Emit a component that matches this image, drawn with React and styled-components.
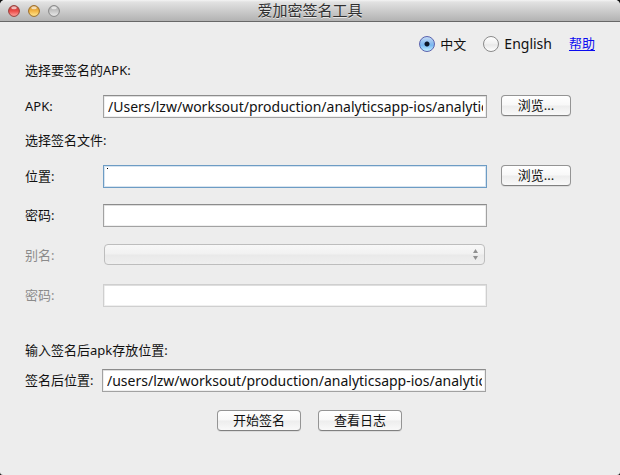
import React, { useState } from "react";
import styled, { createGlobalStyle, css } from "styled-components";

const GlobalStyle = createGlobalStyle`
  * { box-sizing: border-box; }
  body { margin: 0; background: #111; }
  body, input, button, select {
    font-family: "Noto Sans", "Noto Sans CJK SC", sans-serif;
    font-size: 13px;
    color: #111;
  }
`;

const Window = styled.main`
  min-height: 100vh;
  background: #ededed;
  border-radius: 5px 5px 3px 3px;
  overflow: hidden;
`;

const TitleBar = styled.header`
  display: grid;
  grid-template-columns: 1fr auto 1fr;
  align-items: center;
  height: 22px;
  padding: 0 8px;
  background: linear-gradient(#f4f4f4, #e2e2e2 2px, #b2b2b2);
  border-bottom: 1px solid #686868;
`;

const Lights = styled.div`
  display: flex;
  gap: 8px;
`;

const LightSvg = styled.svg`
  display: block;
  width: 12px;
  height: 12px;
`;

const Title = styled.h1`
  margin: 0;
  padding-bottom: 2px;
  font-size: 15px;
  line-height: 18px;
  font-weight: 400;
  color: #303030;
  text-shadow: 0 1px 0 #e8e8e8;
`;

const Languages = styled.div`
  display: flex;
  justify-content: flex-end;
  align-items: center;
  gap: 17px;
  height: 20px;
  margin-top: 12px;
  padding-right: 25px;
  line-height: 20px;
`;

const RadioLabel = styled.label`
  display: flex;
  align-items: center;
  gap: 5px;
`;

const LanguageName = styled.span`
  font-size: ${(p) => (p.lang === "en" ? 14 : 13)}px;
`;

const Radio = styled.input`
  appearance: none;
  width: 16px;
  height: 16px;
  margin: 0;
  border: 1px solid #8a8a8a;
  border-radius: 50%;
  background: linear-gradient(#ffffff, #f0f0f0 50%, #e8e8e8 55%, #ffffff);
  &:checked {
    border-color: #5a63ae;
    background: radial-gradient(circle at 50% 50%, #0b1526 2px, transparent 3px),
      linear-gradient(#c4daf5, #83b9ee 50%, #79b9f2 60%, #c3f0ff);
  }
`;

const HelpLink = styled.a`
  padding-bottom: 2px;
  color: #0b0bf0;
  text-underline-offset: 2px;
`;

const Form = styled.form`
  display: flex;
  flex-direction: column;
  padding-left: 25px;
`;

const Section = styled.h2`
  margin: ${(p) => p.$top}px 0 0;
  font-size: 13px;
  font-weight: 400;
  line-height: 20px;
`;

const Row = styled.div`
  display: grid;
  grid-template-columns: ${(p) => p.$label || 78}px 1fr 70px;
  align-items: start;
  height: 23px;
  margin-top: ${(p) => p.$top}px;
  padding-right: ${(p) => p.$right || 49}px;
`;

const FieldLabel = styled.label`
  line-height: 22px;
  color: ${(p) => (p.$off ? "#8b8b8b" : "#111")};
`;

const Field = styled.input`
  width: calc(100% - 14px);
  height: 23px;
  min-width: 0;
  padding: 0 3px 1px 4px;
  border: 1px solid #a2a2a2;
  border-top-color: #8c8c8c;
  border-radius: 0;
  outline: none;
  font-size: 14px;
  background: #fff;
  box-shadow: inset 0 1px 0 #dedede, inset 0 0 0 1px #efefef;
  &:disabled {
    border-color: #cfcfcf;
  }
  ${(p) =>
    p.$active &&
    css`
      border-color: #6d9cc4;
      background: linear-gradient(#000, #000) 3px 2px / 1px 1px no-repeat #fff;
      box-shadow: inset 0 0 0 1px #d7e4f0;
    `}
`;

const Button = styled.button`
  height: 21px;
  min-width: ${(p) => p.$width || 70}px;
  padding: 0 0 1px;
  border: 1px solid #949494;
  border-bottom-color: #808080;
  border-radius: 4px;
  background: linear-gradient(#ffffff, #f8f8f8 48%, #ededed 52%, #f9f9f9);
  box-shadow: 0 1px 0 #dcdcdc;
  line-height: 18px;
`;

const SelectWrap = styled.div`
  display: grid;
  grid-template-columns: 1fr auto;
  align-items: center;
  height: 21px;
  margin: 0 16px 0 1px;
  padding-right: 6px;
  border: 1px solid #bdbdbd;
  border-radius: 4px;
  background: linear-gradient(#f8f8f8, #f1f1f1 48%, #e9e9e9 52%, #efefef);
`;

const Select = styled.select`
  appearance: none;
  width: 100%;
  height: 19px;
  border: 0;
  background: transparent;
`;

const Arrows = styled.svg`
  width: 5px;
  height: 11px;
`;

const Actions = styled.div`
  display: flex;
  justify-content: center;
  gap: 17px;
  margin: 18px 0 20px;
  padding-right: 26px;
`;

function Light({ id, rim, top, middle, bottom }) {
  return (
    <LightSvg viewBox="0 0 12 12" aria-hidden="true">
      <defs>
        <linearGradient id={id} x1="0" y1="0" x2="0" y2="1">
          <stop offset="0" stopColor={top} />
          <stop offset=".5" stopColor={middle} />
          <stop offset="1" stopColor={bottom} />
        </linearGradient>
      </defs>
      <circle cx="6" cy="6" r="5.4" fill={`url(#${id})`} stroke={rim} strokeWidth="1" />
      <ellipse cx="6" cy="2.7" rx="2.8" ry="1.5" fill="#fff" opacity=".65" />
    </LightSvg>
  );
}

export default function App() {
  const [language, setLanguage] = useState("zh");
  return (
    <>
      <GlobalStyle />
      <Window>
        <TitleBar>
          <Lights>
            <Light id="close" rim="#963d38" top="#b83b38" middle="#ec4b48" bottom="#ffaaa4" />
            <Light id="minimize" rim="#9a6b25" top="#c98a2a" middle="#f3b645" bottom="#ffec98" />
            <Light id="zoom" rim="#858585" top="#a5a5a5" middle="#c6c6c6" bottom="#ececec" />
          </Lights>
          <Title>爱加密签名工具</Title>
        </TitleBar>
        <Languages>
          <RadioLabel>
            <Radio type="radio" name="language" checked={language === "zh"} onChange={() => setLanguage("zh")} />
            <LanguageName lang="zh">中文</LanguageName>
          </RadioLabel>
          <RadioLabel>
            <Radio type="radio" name="language" checked={language === "en"} onChange={() => setLanguage("en")} />
            <LanguageName lang="en">English</LanguageName>
          </RadioLabel>
          <HelpLink href="#help">帮助</HelpLink>
        </Languages>
        <Form onSubmit={(e) => e.preventDefault()}>
          <Section $top={6}>选择要签名的APK:</Section>
          <Row $top={15}>
            <FieldLabel htmlFor="apk">APK:</FieldLabel>
            <Field id="apk" defaultValue="/Users/lzw/worksout/production/analyticsapp-ios/analyticsapp" />
            <Button type="button">浏览...</Button>
          </Row>
          <Section $top={12}>选择签名文件:</Section>
          <Row $top={15}>
            <FieldLabel htmlFor="location">位置:</FieldLabel>
            <Field id="location" $active />
            <Button type="button">浏览...</Button>
          </Row>
          <Row $top={16}>
            <FieldLabel htmlFor="password">密码:</FieldLabel>
            <Field id="password" type="password" />
          </Row>
          <Row $top={17}>
            <FieldLabel htmlFor="alias" $off>别名:</FieldLabel>
            <SelectWrap>
              <Select id="alias" disabled />
              <Arrows viewBox="0 0 5 11" aria-hidden="true">
                <path d="M2.5 0L5 4H0zM0 7H5L2.5 11z" fill="#8f8f8f" />
              </Arrows>
            </SelectWrap>
          </Row>
          <Row $top={17}>
            <FieldLabel htmlFor="alias-password" $off>密码:</FieldLabel>
            <Field id="alias-password" type="password" disabled />
          </Row>
          <Section $top={33}>输入签名后apk存放位置:</Section>
          <Row $top={9} $label={77} $right={50}>
            <FieldLabel htmlFor="output">签名后位置:</FieldLabel>
            <Field id="output" defaultValue="/users/lzw/worksout/production/analyticsapp-ios/analyticsapp" />
          </Row>
          <Actions>
            <Button type="submit" $width={84}>开始签名</Button>
            <Button type="button" $width={84}>查看日志</Button>
          </Actions>
        </Form>
      </Window>
    </>
  );
}
